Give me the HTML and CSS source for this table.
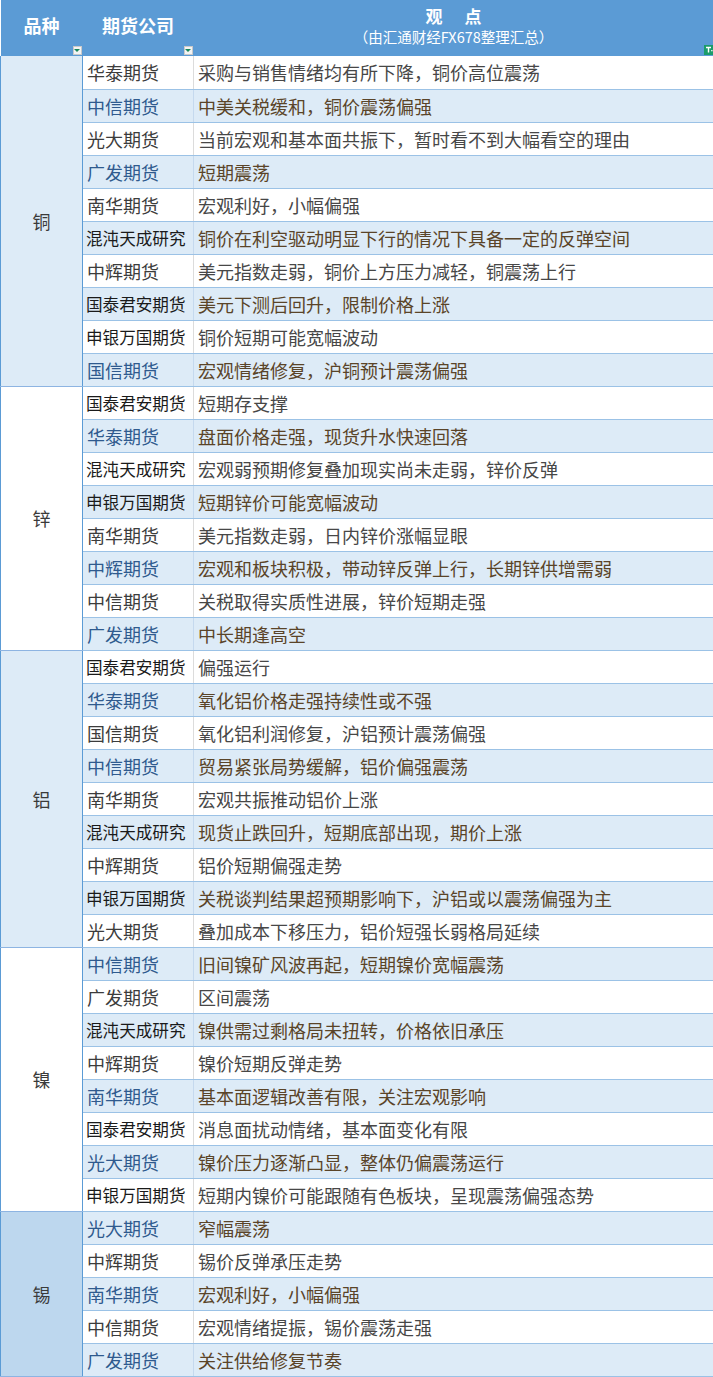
FILE: index.html
```html
<!DOCTYPE html>
<html lang="zh">
<head>
<meta charset="utf-8">
<title>期货公司观点</title>
<link rel="stylesheet" href="styles.css">
</head>
<body>
<table class="sheet">
  <colgroup><col class="c1"><col class="c2"><col class="c3"></colgroup>
  <thead>
    <tr class="head">
      <th class="h1"><span class="ht">品种</span><span class="dd"><i></i></span></th>
      <th class="h2"><span class="ht">期货公司</span><span class="dd"><i></i></span></th>
      <th class="h3"><div class="ht">观<span class="gap"></span>点</div><div class="sub">（由汇通财经FX678整理汇总）</div><span class="ff"><svg viewBox="0 0 10 10" width="10" height="10"><path d="M2 2.5h5M4.5 2.5v5" stroke="#fff" stroke-width="1.4" fill="none"/><rect x="7.2" y="5" width="1.3" height="1.3" fill="#fff"/></svg></span></th>
    </tr>
  </thead>
  <tbody>
    <tr class="w"><td class="kind b" rowspan="10">铜</td><td class="co">华泰期货</td><td class="vp">采购与销售情绪均有所下降，铜价高位震荡</td></tr>
    <tr class="bl"><td class="co">中信期货</td><td class="vp">中美关税缓和，铜价震荡偏强</td></tr>
    <tr class="w"><td class="co">光大期货</td><td class="vp">当前宏观和基本面共振下，暂时看不到大幅看空的理由</td></tr>
    <tr class="bl"><td class="co">广发期货</td><td class="vp">短期震荡</td></tr>
    <tr class="w"><td class="co">南华期货</td><td class="vp">宏观利好，小幅偏强</td></tr>
    <tr class="bl"><td class="co long">混沌天成研究</td><td class="vp">铜价在利空驱动明显下行的情况下具备一定的反弹空间</td></tr>
    <tr class="w"><td class="co">中辉期货</td><td class="vp">美元指数走弱，铜价上方压力减轻，铜震荡上行</td></tr>
    <tr class="bl"><td class="co long">国泰君安期货</td><td class="vp">美元下测后回升，限制价格上涨</td></tr>
    <tr class="w"><td class="co long">申银万国期货</td><td class="vp">铜价短期可能宽幅波动</td></tr>
    <tr class="bl"><td class="co">国信期货</td><td class="vp">宏观情绪修复，沪铜预计震荡偏强</td></tr>

    <tr class="w grp"><td class="kind" rowspan="8">锌</td><td class="co long">国泰君安期货</td><td class="vp">短期存支撑</td></tr>
    <tr class="bl"><td class="co">华泰期货</td><td class="vp">盘面价格走强，现货升水快速回落</td></tr>
    <tr class="w"><td class="co long">混沌天成研究</td><td class="vp">宏观弱预期修复叠加现实尚未走弱，锌价反弹</td></tr>
    <tr class="bl"><td class="co long">申银万国期货</td><td class="vp">短期锌价可能宽幅波动</td></tr>
    <tr class="w"><td class="co">南华期货</td><td class="vp">美元指数走弱，日内锌价涨幅显眼</td></tr>
    <tr class="bl"><td class="co">中辉期货</td><td class="vp">宏观和板块积极，带动锌反弹上行，长期锌供增需弱</td></tr>
    <tr class="w"><td class="co">中信期货</td><td class="vp">关税取得实质性进展，锌价短期走强</td></tr>
    <tr class="bl"><td class="co">广发期货</td><td class="vp">中长期逢高空</td></tr>

    <tr class="w grp"><td class="kind b" rowspan="9">铝</td><td class="co long">国泰君安期货</td><td class="vp">偏强运行</td></tr>
    <tr class="bl"><td class="co">华泰期货</td><td class="vp">氧化铝价格走强持续性或不强</td></tr>
    <tr class="w"><td class="co">国信期货</td><td class="vp">氧化铝利润修复，沪铝预计震荡偏强</td></tr>
    <tr class="bl"><td class="co">中信期货</td><td class="vp">贸易紧张局势缓解，铝价偏强震荡</td></tr>
    <tr class="w"><td class="co">南华期货</td><td class="vp">宏观共振推动铝价上涨</td></tr>
    <tr class="bl"><td class="co long">混沌天成研究</td><td class="vp">现货止跌回升，短期底部出现，期价上涨</td></tr>
    <tr class="w"><td class="co">中辉期货</td><td class="vp">铝价短期偏强走势</td></tr>
    <tr class="bl"><td class="co long">申银万国期货</td><td class="vp">关税谈判结果超预期影响下，沪铝或以震荡偏强为主</td></tr>
    <tr class="w"><td class="co">光大期货</td><td class="vp">叠加成本下移压力，铝价短强长弱格局延续</td></tr>

    <tr class="bl grp"><td class="kind" rowspan="8">镍</td><td class="co">中信期货</td><td class="vp">旧间镍矿风波再起，短期镍价宽幅震荡</td></tr>
    <tr class="w"><td class="co">广发期货</td><td class="vp">区间震荡</td></tr>
    <tr class="bl"><td class="co long">混沌天成研究</td><td class="vp">镍供需过剩格局未扭转，价格依旧承压</td></tr>
    <tr class="w"><td class="co">中辉期货</td><td class="vp">镍价短期反弹走势</td></tr>
    <tr class="bl"><td class="co">南华期货</td><td class="vp">基本面逻辑改善有限，关注宏观影响</td></tr>
    <tr class="w"><td class="co long">国泰君安期货</td><td class="vp">消息面扰动情绪，基本面变化有限</td></tr>
    <tr class="bl"><td class="co">光大期货</td><td class="vp">镍价压力逐渐凸显，整体仍偏震荡运行</td></tr>
    <tr class="w"><td class="co long">申银万国期货</td><td class="vp">短期内镍价可能跟随有色板块，呈现震荡偏强态势</td></tr>

    <tr class="bl grp"><td class="kind d" rowspan="5">锡</td><td class="co">光大期货</td><td class="vp">窄幅震荡</td></tr>
    <tr class="w"><td class="co">中辉期货</td><td class="vp">锡价反弹承压走势</td></tr>
    <tr class="bl"><td class="co">南华期货</td><td class="vp">宏观利好，小幅偏强</td></tr>
    <tr class="w"><td class="co">中信期货</td><td class="vp">宏观情绪提振，锡价震荡走强</td></tr>
    <tr class="bl"><td class="co">广发期货</td><td class="vp">关注供给修复节奏</td></tr>
  </tbody>
</table>
</body>
</html>
```

FILE: styles.css
```css
html, body {
  margin: 0;
  padding: 0;
  background: #ffffff;
}
body {
  font-family: "Noto Sans CJK SC", "Noto Sans", sans-serif;
}
.sheet {
  border-collapse: collapse;
  table-layout: fixed;
  width: 713px;
}
.c1 { width: 82px; }
.c2 { width: 111px; }
.c3 { width: 520px; }

.head th {
  background: #5b9bd5;
  color: #ffffff;
  height: 56px;
  padding: 0;
  position: relative;
  vertical-align: top;
  font-weight: bold;
  border: 0;
  text-align: center;
}
.head .ht {
  font-size: 18px;
  line-height: 20px;
  display: block;
  padding-top: 15px;
}
.head .h3 .ht {
  padding-top: 7px;
  font-size: 17px;
  line-height: 17px;
}
.gap {
  display: inline-block;
  width: 22px;
}
.head .sub {
  margin-top: 5px;
  font-size: 14.5px;
  font-weight: normal;
  line-height: 16px;
}
.dd {
  position: absolute;
  right: 1px;
  bottom: 1px;
  width: 9px;
  height: 9px;
  box-sizing: border-box;
  background: #f4f4f4;
  border: 1px solid #c9c9c9;
  display: flex;
  align-items: center;
  justify-content: center;
}
.dd i {
  width: 0;
  height: 0;
  border-left: 3px solid transparent;
  border-right: 3px solid transparent;
  border-top: 3px solid #18875a;
}
.ff {
  position: absolute;
  right: 0;
  bottom: 1px;
  width: 10px;
  height: 10px;
  background: #1b9c6b;
}
.ff svg { display: block; }

tbody tr { height: 33px; }
tbody td {
  padding: 0 0 0 4px;
  font-size: 18px;
  line-height: 20px;
  white-space: nowrap;
  overflow: hidden;
  border-bottom: 1px solid #9bc2e6;
  vertical-align: middle;
}
tr.w td { background: #ffffff; }
tr.bl td { background: #ddebf7; }

td.kind {
  text-align: center;
  padding: 0;
  color: #3a3a3a;
  border-left: 1px solid #5b9bd5;
  border-right: 1px solid #5b9bd5;
  border-bottom: 1px solid #8db4e2;
}
tr.w td.kind, tr.bl td.kind { background: #ffffff; }
tr.w td.kind.b, tr.bl td.kind.b { background: #ddebf7; }
tr.w td.kind.d, tr.bl td.kind.d { background: #bdd7ee; }

td.co {
  color: #3c3c3c;
  border-right: 1px solid #dcdcdc;
}
tr.bl td.co { color: #2f5a8e; border-right-color: #c5d9ee; }
td.co.long { color: #1a1a1a; font-size: 16.6px; padding-left: 3px; }
tr.bl td.co.long { color: #1a1a1a; }

td.vp {
  color: #474747;
  border-right: 1px solid #5b9bd5;
}
tr.bl td.vp { color: #5a4428; }
```
